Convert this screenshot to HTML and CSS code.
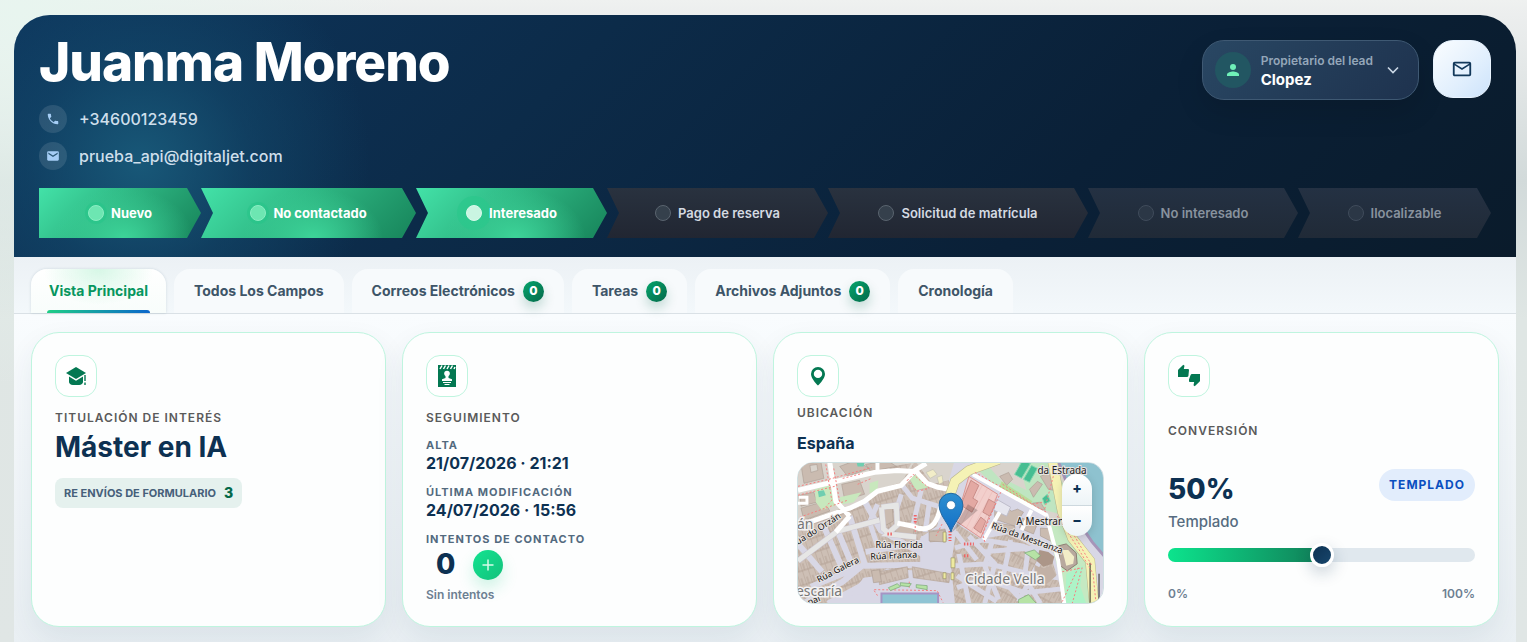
FILE: index.html
```html
<!DOCTYPE html>
<html lang="es">
<head>
<meta charset="utf-8">
<meta name="viewport" content="width=device-width, initial-scale=1">
<title>Juanma Moreno</title>
<link rel="stylesheet" href="styles.css">
</head>
<body>
<main class="lead">
  <header class="hero">
    <div class="hero-top">
      <div class="identity">
        <h1 class="name">Juanma Moreno</h1>
        <ul class="contacts">
          <li class="contact">
            <span class="contact-icon"><svg width="14" height="14" viewBox="0 0 24 24" fill="#a5cdf5"><path d="M6.6 10.8c1.4 2.8 3.8 5.1 6.6 6.600l2.200-2.200c.3-.3.7-.4 1-.2 1.100.4 2.300.6 3.600.6.6 0 1 .4 1 1V20c0 .6-.4 1-1 1C10.600 21 3 13.400 3 4c0-.6.4-1 1-1h3.500c.6 0 1 .4 1 1 0 1.300.2 2.500.6 3.600.1.300 0 .7-.2 1l-2.300 2.200z"/></svg></span>
            <span>+34600123459</span>
          </li>
          <li class="contact">
            <span class="contact-icon"><svg width="14" height="14" viewBox="0 0 24 24" fill="#a5cdf5"><path d="M20 4H4a2 2 0 0 0-2 2v12c0 1.100.9 2 2 2h16a2 2 0 0 0 2-2V6a2 2 0 0 0-2-2zm0 4.500-8 5-8-5V6.200l8 5 8-5z"/></svg></span>
            <span>prueba_api@digitaljet.com</span>
          </li>
        </ul>
      </div>
      <div class="actions">
        <button class="owner" type="button">
          <span class="avatar"><svg width="18" height="18" viewBox="0 0 24 24" fill="#6ff0b8"><circle cx="12" cy="8" r="4"/><path d="M4 20v-2c0-2.700 5.300-4 8-4s8 1.300 8 4v2z"/></svg></span>
          <span class="owner-text"><span class="owner-label">Propietario del lead</span><span class="owner-name">Clopez</span></span>
          <svg width="20" height="20" viewBox="0 0 24 24" fill="none" stroke="#c9d6e4" stroke-width="2"><path d="m6 9 6 6 6-6"/></svg>
        </button>
        <button class="mail" type="button" aria-label="Enviar correo">
          <svg width="22" height="22" viewBox="0 0 24 24" fill="#12385a"><path d="M20 4H4a2 2 0 0 0-2 2v12c0 1.100.9 2 2 2h16a2 2 0 0 0 2-2V6a2 2 0 0 0-2-2zm0 14H4V8l8 5 8-5v10zm-8-7L4 6h16l-8 5z"/></svg>
        </button>
      </div>
    </div>
    <ol class="pipeline">
      <li class="stage done w-1"><span class="dot"></span>Nuevo</li>
      <li class="stage done w-2"><span class="dot"></span>No contactado</li>
      <li class="stage done current w-3"><span class="dot"></span>Interesado</li>
      <li class="stage w-4"><span class="dot"></span>Pago de reserva</li>
      <li class="stage w-5"><span class="dot"></span>Solicitud de matrícula</li>
      <li class="stage closed w-6"><span class="dot"></span>No interesado</li>
      <li class="stage closed w-7"><span class="dot"></span>Ilocalizable</li>
    </ol>
  </header>

  <nav class="tabs">
    <button class="tab active" type="button">Vista Principal</button>
    <button class="tab" type="button">Todos Los Campos</button>
    <button class="tab" type="button">Correos Electrónicos <span class="badge">0</span></button>
    <button class="tab" type="button">Tareas <span class="badge">0</span></button>
    <button class="tab" type="button">Archivos Adjuntos <span class="badge">0</span></button>
    <button class="tab" type="button">Cronología</button>
  </nav>

  <section class="cards">
    <article class="card">
      <span class="card-icon"><svg width="24" height="24" viewBox="0 0 24 24" fill="#047852"><path d="M12 3 2 9l10 6 10-6z"/><path d="M5 12.500V18c0 1.500 1.500 3 4 3h6c2.500 0 4-1.500 4-3v-5.500l-7 4.200z"/><path d="M20.300 11h1.400v6h-1.400zM20.300 18.500h1.400V21h-1.400z"/></svg></span>
      <h2 class="card-label">Titulación de interés</h2>
      <p class="headline">Máster en IA</p>
      <p class="chip">RE ENVÍOS DE FORMULARIO <b class="chip-count">3</b></p>
    </article>

    <article class="card">
      <span class="card-icon"><svg width="24" height="24" viewBox="0 0 24 24"><path fill="#047852" d="M3 1h18v22H3z"/><path fill="none" stroke="#fff" stroke-width="1.500" d="m5 5 2-3.500M8.500 5l2-3.500M12 5l2-3.500M15.500 5l2-3.500M19 5l1-2"/><circle cx="12" cy="9.500" r="2.800" fill="#fff"/><path fill="#fff" d="M10.500 11h3v3l3.500 1.300V17H7v-1.700l3.500-1.300zM8 18h8v1H8zM9.500 20h5v1h-5z"/></svg></span>
      <h2 class="card-label">Seguimiento</h2>
      <dl class="facts">
        <div class="fact"><dt>Alta</dt><dd>21/07/2026 · 21:21</dd></div>
        <div class="fact"><dt>Última modificación</dt><dd>24/07/2026 · 15:56</dd></div>
        <div class="fact"><dt>Intentos de contacto</dt>
          <dd class="attempts"><span class="attempt-count">0</span>
            <button class="add" type="button" aria-label="Añadir intento"><svg width="14" height="14" viewBox="0 0 14 14" fill="none" stroke="#d6fbe9" stroke-width="1.500"><path d="M7 1.500v11M1.500 7h11"/></svg></button></dd></div>
      </dl>
      <p class="note">Sin intentos</p>
    </article>

    <article class="card">
      <span class="card-icon"><svg width="24" height="24" viewBox="0 0 24 24" fill="#047852"><path fill-rule="evenodd" d="M12 3a7 7 0 0 0-7 7c0 5 7 11.500 7 11.500S19 15 19 10a7 7 0 0 0-7-7zm0 2.700a4.200 4.200 0 1 1 0 8.400 4.200 4.200 0 0 1 0-8.400z"/></svg></span>
      <h2 class="card-label near">Ubicación</h2>
      <p class="place">España</p>
      <div class="map">
        <svg class="map-canvas" viewBox="0 0 307 142" preserveAspectRatio="xMidYMid slice" role="img" aria-label="Mapa de Cidade Vella">
          <defs>
            <pattern id="houses" width="6" height="14" patternUnits="userSpaceOnUse" patternTransform="rotate(-18)"><path fill="#cdbfb5" d="M0 0h6v14H0z"/><path stroke="#ae9c8f" stroke-width=".8" fill="none" d="M0 0v14M3 0v7M0 7h6"/></pattern>
            <pattern id="terraces" width="6" height="13" patternUnits="userSpaceOnUse" patternTransform="rotate(28)"><path fill="#cdbfb5" d="M0 0h6v13H0z"/><path stroke="#ae9c8f" stroke-width=".8" fill="none" d="M0 0v13M3 5v8M0 5h6"/></pattern>
            <pattern id="ward" width="6" height="6" patternUnits="userSpaceOnUse" patternTransform="rotate(28)"><path fill="#f2cfcc" d="M0 0h6v6H0z"/><path stroke="#dfa8a5" stroke-width=".6" d="M0 0v6"/></pattern>
            <linearGradient id="pin" x2="0" y2="1"><stop stop-color="#2e8fd0"/><stop offset="1" stop-color="#126fc6"/></linearGradient>
          </defs>
          <path fill="#d8d7e5" d="M0 0h307v142H0z"/>
          <path fill="url(#houses)" d="M0 0h152v22l-8 26-4 16-17 12v34L70 116l-37 26H0z"/>
          <path fill="#d9d4cd" d="M0 0h117L104 20 52 44 0 60z"/>
          <path fill="url(#houses)" d="m84 26 20-6-3 11-17 8zM56 56l24-16 2 14-18 6zM92 4l22-3-4 7-18 2z"/>
          <g fill="#cabbb0" stroke="#aa9c91" stroke-width=".6">
            <path d="m3 2 20-3 3 17-20 5zM42 4l16-6 14 8-22 8zM44 22l18-4 5 14-20 6zM68 2l22-4 9 6-26 5zM2 33l14-3 3 10-16 4zM3 46l24-7 5 10-26 9z"/>
            <path d="M12 3l7-1 1 6-7 2z" fill="#d9d4cd"/>
          </g>
          <g fill="#c8e8bd"><path d="m17 27 15-4 6 20-14 5-6-8zM72 21l9-3-1 10-8 3zM112 16l9-5 10 14-12 3zM42 35l22-5-8 10-12 2z"/></g>
          <path fill="#6fceb0" d="m20 29 6-1 2 5-7 2zM59 0h8l-1 4h-6z"/>
          <path fill="#d9d4cd" d="m119 0 38 0-5 18-17 4z"/>
          <g fill="#f2edc8" stroke="#bba" stroke-width=".5"><path d="m129 10 7-3 4 5-7 4zM140 15l5-2 1 7-4 2z"/></g>
          <g stroke="#d8d7e5" fill="none">
            <path stroke-width="6" d="m52 54 15 48-22 18-40 22M40 69l16 38M0 82l24 28M67 39l16 29 42 24M68 90l60-10M66 104l58-1M13 125l54-22M30 142l60-32 66 4M24 60l22 50"/>
            <path stroke-width="5" d="m104 22 11 14 32 10M80 42l-8 18 10 30M104 32l-5 16M124 28l-8 34M132 42l-4 28"/>
          </g>
          <path fill="#d8d7e5" d="m124 74 34-4 5 42-39 2zM66 116l52-7 36 14-8 19H60l8-10-16 2z"/>
          <g fill="url(#houses)" stroke="#b5a498" stroke-width=".6"><path d="m81 110 29-5 1 11-29 7zM115 105l38 7-1 9-36-5zM132 69l16-2 2 11-17 2z"/></g>
          <g fill="#cabbb0" stroke="#aa9c91" stroke-width=".6"><path d="m86 46 9-1 1 14-9 5zM99 63l18 3-1 8-18-4zM74 109l8-1 2 12-8 1zM132 70l16-2v12l-16-1z"/></g>
          <path fill="url(#terraces)" d="m160 62 24 15 30-5 41 24 14 46H158l-4-38z"/>
          <g stroke="#d8d7e5" stroke-width="5" fill="none"><path d="m158 86 28-8 40 6 36 14M158 104l34-2 40 10 30 4M160 126l26-9 42 14 40-4M172 74l26 28-10 40M196 78l-8 26 14 34M214 78l-8 40 22 24M232 84l-4 32 16 26M158 70l22 28M162 92l10 50M246 94l-24 46M186 90l76-6M160 114l40 26"/></g>
          <path fill="#d9d4cd" d="m176 8 30-10h60l8 30 8 60-22 2-8-38z"/>
          <g fill="#bfe5c1"><path d="m222 0 34 0 12 24-4 28-24-6-34-22 4-6 20 10zM182 8l10-4 14 16-8 4z"/></g>
          <path fill="#b8dd9a" d="m205 19 31 20-4 5-30-18z"/>
          <g fill="#46be92" stroke="#85d5b0"><path d="m218 12 8-14 8 3-9 15zM227 17l8-14 6 3-8 14zM246 36l5-4 3 7-6 3z"/></g>
          <g fill="#cabbb0" stroke="#aa9c91" stroke-width=".6"><path d="m203 14 9-4 4 7-6 6zM233 27l8-8 5 3-9 13zM244 14l9-4 4 18-5-1zM236 41l8-1 5 8-9-2zM198 48l8-4 9 5 6-2 6 3-9 14-20-7zM196 60l22 4 1 7-26-4zM226 56l14 8-3 8-14-6zM244 66l12 1 2 14-14-7z"/></g>
          <g stroke="#bdbccb" stroke-width="1" fill="#e6e6ee"><path d="m200 37 14 8-4 9-13-6z"/></g>
          <path fill="url(#ward)" stroke="#dc9591" d="m172 14 29 18-17 44-25-17z"/>
          <path fill="#e3a9a3" stroke="#c98d88" d="m174 18 8 5-6 13 5 3-6 11-11-7zM192 37l7 4-6 13-7-4zM184 55l5 4-5 12-7-5z"/>
          <path fill="#c5e9c2" d="m253 56 15 0 10 20 14 18 8 48h-34l-2-26-10-38z"/>
          <path fill="#adf3c7" d="m270 112 17-8-3 20 6 18h-21z"/>
          <path fill="#b8a99e" stroke="#8d7d72" d="m262 84 8-2 10 9 1 11-10 7-7-5z"/><path fill="#f2edc8" d="m266 88 6 0 6 7-1 7-7 2z"/>
          <path fill="#ac9688" d="m243 88 9 2 6 5-2 7-9 3-7-6z"/><path fill="#c2b1a6" d="m238 103 8 4 9-3 5 10-14 12-8-8z"/>
          <path fill="#8ec2cf" d="M261-1h47v95l-12-14-16-28-10-36z"/>
          <path fill="none" stroke="#a695b9" stroke-width="3" d="m262-1 12 30 5 26 17 25 12 14"/>
          <path fill="#8fc4d4" stroke="#a694c4" stroke-width="2" d="M84 132h57v12H84z"/>
          <g fill="none" stroke="#cbc6d0" stroke-width="6"><path d="M0 99 40 69l42-11M84 45l15-2 1 20-10 9 29 3M84 45l2 22 6 5"/></g>
          <g fill="none" stroke="#e6e6e5" stroke-width="5"><path d="M0 99 40 69l42-11M84 45l15-2 1 20-10 9 29 3M84 45l2 22 6 5"/></g>
          <g fill="none" stroke="#fff" stroke-width="5" stroke-linejoin="round"><path d="m0 28 34-8 43-10 23-2 16 1 13-8M32 0l6 39 14 15M0 64l52-18 15-7 13-10 24-6 14-15 12 13 11 4 16 3M52 54 38 70M100 61l15 3c15 7 22 0 26-10l4-14"/></g>
          <path fill="none" stroke="#fff" stroke-width="4" d="m176 12 74 41 12 46 6 43M203 50l-16 28M235 48l-10 20M80-2v12"/>
          <path fill="none" stroke="#fff" stroke-width="3" d="M0 41h9v-6H1"/>
          <g fill="none" stroke="#b9b58c" stroke-width="10"><path d="m152 36 6-17 14-11 30-11M256-2l10 52 10 26 18 23 4 43"/></g>
          <g fill="none" stroke="#f5f2b5" stroke-width="9"><path d="m152 36 6-17 14-11 30-11M256-2l10 52 10 26 18 23 4 43"/></g>
          <path fill="none" stroke="#262626" d="M294 101v41M303 112v30"/>
          <g fill="none" stroke="#f58080" stroke-width="1" stroke-dasharray="2 2"><path d="m0 24 31-7 43-12M0 33l37-9M36 6l6 34M28 2l6 36-8 9M45 16l20-5M60 22l14-6M2 55l48-17M110 18l6-6 16 14-12 3zM118 56v14M178 10l72 40M206 22l30 20 10-2M261 54l22 34 14 24 3 30M270 60l26 44M266 110l20-4-10 36M282 106l-16 34M80 134l-4-6 64 1 6 12M112 120v8M145 62l-6 12M188 80l-2-8 18-42M258 10l-10 38"/></g>
          <g fill="none" stroke="#ef6464" stroke-width="3" stroke-dasharray="1.500 1.500"><path d="M153 69v10M167 82h10M167 94h6M118 53v9M90 72h6"/></g>
          <g fill="#eeeaa0" stroke="#9a946c" stroke-width=".7"><path d="M146 70h3v10h-3zM154 96h4v10h-4zM154 111h3v7h-3zM146 111h3v6h-3z"/></g>
          <g fill="#b6e3a5" stroke="#79a676" stroke-width=".7"><path d="m91 126 9-4 3 3-10 4zM103 121l11 1-2 3-9-1zM119 123l11 1v4l-11-2zM228 91l10-3 6 6-5 4zM222 138l10-5 8 9h-18z"/></g>
          <g class="street">
            <text transform="translate(-5 86) rotate(-32)">Rúa do Orzán</text>
            <text transform="translate(21 121) rotate(-27)">Rúa Galera</text>
            <text x="78" y="86">Rúa Florida</text>
            <text transform="translate(73 98) rotate(-3)">Rúa Franxa</text>
            <text transform="translate(194 66) rotate(20)">Rúa da Mestranza</text>
            <text transform="translate(11 144) rotate(-22)">nal</text>
          </g>
          <g class="spot"><text x="241" y="12">da Estrada</text><text x="220" y="63">A Mestranza</text></g>
          <g class="district"><text x="-1" y="67">án</text><text x="-2" y="134">escaría</text><text x="168" y="122">Cidade Vella</text></g>
          <path fill="#000" opacity=".18" d="m154 71 17-29 10 6z"/>
          <path fill="url(#pin)" stroke="#2468a0" d="M154 70c-2-8-12-17-12-27a12 12 0 0 1 24 0c0 10-10 19-12 27z"/>
          <circle cx="154" cy="43" r="4.500" fill="#fff" stroke="#2468a0" stroke-width=".7"/>
        </svg>
        <div class="zoom"><button class="zoom-btn" type="button">+</button><button class="zoom-btn" type="button">−</button></div>
      </div>
    </article>

    <article class="card">
      <span class="card-icon"><svg width="24" height="24" viewBox="0 0 24 24" fill="#047852"><path d="M12 6c0-.5-.5-1-1-1H6.800l.7-3.200L6.300.8 1.400 5.600C1.100 5.900 1 6.200 1 6.500V13h9c.6 0 1.200-.4 1.400-.9z"/><path d="M22.500 10H15c-.6 0-1.200.4-1.400.9L12 15.500V17c0 .6.5 1 1 1h4.200l-.7 3.200 1.200 1.100 5-4.900c.2-.3.3-.6.3-.9V10z"/></svg></span>
      <h2 class="card-label far">Conversión</h2>
      <div class="score-row"><p class="score">50%</p><span class="pill">TEMPLADO</span></div>
      <label class="score-label" for="conversion">Templado</label>
      <input class="slider" id="conversion" type="range" min="0" max="100" value="50">
      <div class="scale"><span>0%</span><span>100%</span></div>
    </article>
  </section>
</main>
</body>
</html>
```
FILE: styles.css
```css
* { box-sizing: border-box; }
body {
  margin: 0;
  min-height: 100vh;
  display: flex;
  overflow-x: hidden;
  font-family: Inter, "Liberation Sans", sans-serif;
  color: #0d3152;
  background: radial-gradient(circle at 20px 10px, #e8f5ef, transparent 380px),
    linear-gradient(180deg, #eff1f0 0, #eceeee 14px, #d2dada 180px, #dfe6e4 320px, #e0e6e5 100%);
}
h1, h2, p, ul, ol, dl, dd { margin: 0; padding: 0; }
ul, ol { list-style: none; }
button { font-family: inherit; border: 0; cursor: pointer; }

.lead {
  flex: 1;
  min-width: 0;
  margin: 15px 11px 0 14px;
  border-radius: 36px 36px 0 0;
  overflow: hidden;
  background: linear-gradient(180deg, #f9fcfe 300px, #e9eff3 100%);
}

/* Header */
.hero {
  padding: 20px 25px 19px;
  color: #fff;
  background: radial-gradient(circle at 126px 148px, #185878 0, rgba(20, 78, 112, 0.5) 110px, transparent 230px),
    linear-gradient(135deg, #0d355c 0%, #0c2b49 35%, #0a2037 70%, #0a1b2b 100%);
}
.hero-top { display: flex; justify-content: space-between; align-items: flex-start; }
.name { font-size: 53px; line-height: 54px; font-weight: 800; letter-spacing: -1px; }
.contacts { display: grid; gap: 9px; margin-top: 16px; }
.contact { display: flex; align-items: center; gap: 12px; font-size: 16px; line-height: 24px; font-weight: 500; color: #cfdfeb; }
.contact-icon {
  display: grid; place-items: center;
  width: 28px; height: 28px;
  border-radius: 50%;
  background: rgba(255, 255, 255, 0.11);
}
.actions { display: flex; gap: 14px; padding-top: 5px; align-items: flex-start; }
.owner {
  display: flex; align-items: center; gap: 10px;
  height: 60px;
  padding: 0 15px 0 12px;
  border: 1px solid #3f5973;
  border-radius: 22px;
  color: #fff;
  text-align: left;
  background: linear-gradient(135deg, #294763, #1e324e);
  box-shadow: 0 12px 28px rgba(0, 0, 0, 0.12);
}
.avatar { display: grid; place-items: center; width: 36px; height: 36px; border-radius: 50%; background: #225662; }
.owner-text { display: grid; padding-top: 2px; }
.owner-label { font-size: 12px; line-height: 18px; font-weight: 600; color: #94a6b9; }
.owner-name { font-size: 15px; line-height: 20px; font-weight: 700; }
.mail {
  display: grid; place-items: center;
  width: 58px; height: 58px;
  border: 1px solid #e9f4ff;
  border-radius: 20px;
  background: linear-gradient(135deg, #fafdff, #e1effd 60%, #cde3fb);
}

/* Pipeline */
.pipeline { display: flex; margin-top: 18px; }
.stage {
  display: flex; align-items: center; justify-content: center; gap: 7px;
  min-width: 0;
  height: 50px;
  font-size: 13px; line-height: 18px; font-weight: 600;
  color: #d4dae2;
  white-space: nowrap;
  background: linear-gradient(180deg, #29323f, #212632);
  clip-path: polygon(0 0, calc(100% - 14px) 0, 100% 50%, calc(100% - 14px) 100%, 0 100%, 12px 50%);
}
.stage:first-child { clip-path: polygon(0 0, calc(100% - 14px) 0, 100% 50%, calc(100% - 14px) 100%, 0 100%); }
.dot { width: 16px; height: 16px; border-radius: 50%; border: 1px solid #5a646f; background: #35404c; }
.done {
  color: #fff; font-weight: 700;
  background: radial-gradient(ellipse 70px 50px at 52% 100%, #3dd499, transparent),
    linear-gradient(135deg, #43e2a8 0%, #2aad7b 55%, #17845a 100%);
}
.done .dot { border-color: #8bedc3; background: #6de6b2; box-shadow: 0 0 0 3px rgba(39, 197, 136, 0.6); }
.current .dot { border-color: #d9f9eb; background: #caf5e2; box-shadow: 0 0 0 9px rgba(43, 199, 139, 0.7); }
.closed { color: #88929e; background: linear-gradient(180deg, #243143, #202a37); }
.closed .dot { border-color: #404c5b; background: #2b3746; }
.w-1 { flex: 162 1 0; }
.w-2 { flex: 215 1 0; }
.w-3 { flex: 191 1 0; }
.w-4 { flex: 221 1 0; }
.w-5 { flex: 260 1 0; }
.w-6 { flex: 210 1 0; }
.w-7 { flex: 193 1 0; }

/* Tabs */
.tabs {
  display: flex; gap: 8px;
  padding: 12px 17px 0;
  border-bottom: 1px solid #dae1e6;
  background: linear-gradient(180deg, #ecf1f5, #f3f8fb);
}
.tab {
  display: flex; align-items: center; gap: 8px;
  height: 44px;
  padding: 0 20px;
  border-radius: 16px 16px 0 0;
  font-size: 14px; line-height: 20px; font-weight: 700;
  color: #3e5568;
  white-space: nowrap;
  background: #f7fafc;
}
.active {
  position: relative;
  padding: 0 18px;
  color: #07965f;
  background: radial-gradient(ellipse 55px 36px at 50% 0, #d6f7e6, transparent), linear-gradient(#fff, #f8fdfb);
  box-shadow: 0 0 3px rgba(20, 60, 80, 0.15);
}
.active::after {
  content: "";
  position: absolute; left: 16px; right: 16px; bottom: 0;
  height: 3px;
  border-radius: 3px 3px 0 0;
  background: linear-gradient(90deg, #1fce86, #0b66cc);
}
.badge {
  display: grid; place-items: center;
  width: 21px; height: 21px;
  border-radius: 50%;
  font-size: 12px; line-height: 14px; font-weight: 800;
  color: #fff;
  background: linear-gradient(135deg, #06a56c, #04694a);
  box-shadow: 0 6px 12px rgba(4, 105, 74, 0.22);
}

/* Cards */
.cards { display: grid; grid-template-columns: repeat(4, minmax(0, 1fr)); gap: 16px; padding: 18px 17px 20px; }
.card {
  display: flex; flex-direction: column; align-items: flex-start;
  min-height: 295px;
  padding: 22px 23px;
  border: 1px solid #bff5df;
  border-radius: 28px;
  background: #fdfefe;
  box-shadow: 0 12px 30px rgba(20, 55, 85, 0.07);
}
.card-icon {
  display: grid; place-items: center;
  width: 42px; height: 42px;
  border: 1px solid #bff5df;
  border-radius: 14px;
  background: #fff;
}
.card-label { margin-top: 12px; font-size: 12px; line-height: 18px; font-weight: 600; letter-spacing: 1px; text-transform: uppercase; color: #5a5a5a; }
.near { margin-top: 7px; }
.far { margin-top: 25px; }
.headline { font-size: 28px; line-height: 36px; font-weight: 700; margin-top: 2px; }
.chip {
  display: flex; align-items: center; gap: 8px;
  height: 30px;
  margin-top: 13px; padding: 0 9px;
  border-radius: 8px;
  font-size: 11px; line-height: 16px; font-weight: 700;
  color: #46607a;
  background: #e5f1ee;
}
.chip-count { font-size: 14px; font-weight: 800; color: #04694a; }
.facts { display: grid; gap: 10px; margin-top: 9px; }
.fact dt { font-size: 11px; line-height: 18px; font-weight: 700; letter-spacing: 1px; text-transform: uppercase; color: #536a7e; }
.fact dd { font-size: 16px; line-height: 19px; font-weight: 700; }
.fact .attempts { display: flex; gap: 18px; padding: 2px 0 0 10px; }
.attempt-count { font-size: 28px; line-height: 28px; font-weight: 800; }
.add {
  display: grid; place-items: center;
  width: 30px; height: 30px;
  padding: 0;
  border-radius: 50%;
  background: linear-gradient(135deg, #12e390, #14c17c);
  box-shadow: 0 8px 16px rgba(18, 200, 130, 0.2);
}
.note { margin-top: 7px; font-size: 12px; line-height: 16px; font-weight: 600; color: #6d8092; }
.place { margin-top: 9px; font-size: 16px; line-height: 24px; font-weight: 700; }
.map {
  position: relative;
  align-self: stretch;
  height: 142px;
  margin-top: 7px;
  border: 1px solid #cfe0e2;
  border-radius: 16px;
  overflow: hidden;
}
.map-canvas { display: block; width: 100%; height: 100%; font-family: "Noto Sans", sans-serif; }
.street { font-size: 9px; fill: #111; stroke: #e9e4e1; stroke-width: 2px; paint-order: stroke; }
.spot { font-size: 10px; fill: #222; stroke: #e9e4e1; stroke-width: 2px; paint-order: stroke; }
.district { font-size: 14px; fill: #777; stroke: #f4f2f3; stroke-width: 3px; paint-order: stroke; }
.zoom { position: absolute; top: 11px; right: 11px; display: grid; border-radius: 15px; overflow: hidden; box-shadow: 0 2px 8px rgba(0, 0, 0, 0.15); }
.zoom-btn { width: 30px; height: 31px; padding: 0 0 4px; font-size: 14px; font-weight: 800; color: #0d3152; background: linear-gradient(#fff, #edf4f7); }
.zoom-btn + .zoom-btn { border-top: 1px solid #cdd8de; }

.score-row { display: flex; justify-content: space-between; align-self: stretch; margin-top: 29px; }
.score { margin-top: 2px; font-size: 28px; line-height: 36px; font-weight: 800; }
.pill {
  display: flex; align-items: center;
  height: 32px;
  padding: 0 10px;
  border-radius: 16px;
  font-size: 12px; line-height: 16px; font-weight: 700; letter-spacing: 1px;
  color: #0a4fc0;
  background: #e2edfc;
}
.score-label { margin-top: 5px; font-size: 15px; line-height: 20px; font-weight: 500; color: #566c80; }
.slider {
  appearance: none;
  align-self: stretch;
  height: 24px;
  margin: 11px 0 0;
  background: transparent;
}
.slider::-webkit-slider-runnable-track {
  height: 14px;
  border-radius: 7px;
  background: linear-gradient(90deg, #0ce48d, #117f58) 0 0 / 50% 100% no-repeat, #e0e8ee;
}
.slider::-webkit-slider-thumb {
  appearance: none;
  width: 24px; height: 24px;
  margin-top: -5px;
  border: 3px solid #fff;
  border-radius: 50%;
  background: linear-gradient(135deg, #0d3152, #17466c);
  box-shadow: 0 6px 16px rgba(13, 49, 82, 0.22);
}
.scale { display: flex; justify-content: space-between; align-self: stretch; margin-top: 17px; font-size: 12px; line-height: 20px; font-weight: 600; color: #6d8092; }
```
